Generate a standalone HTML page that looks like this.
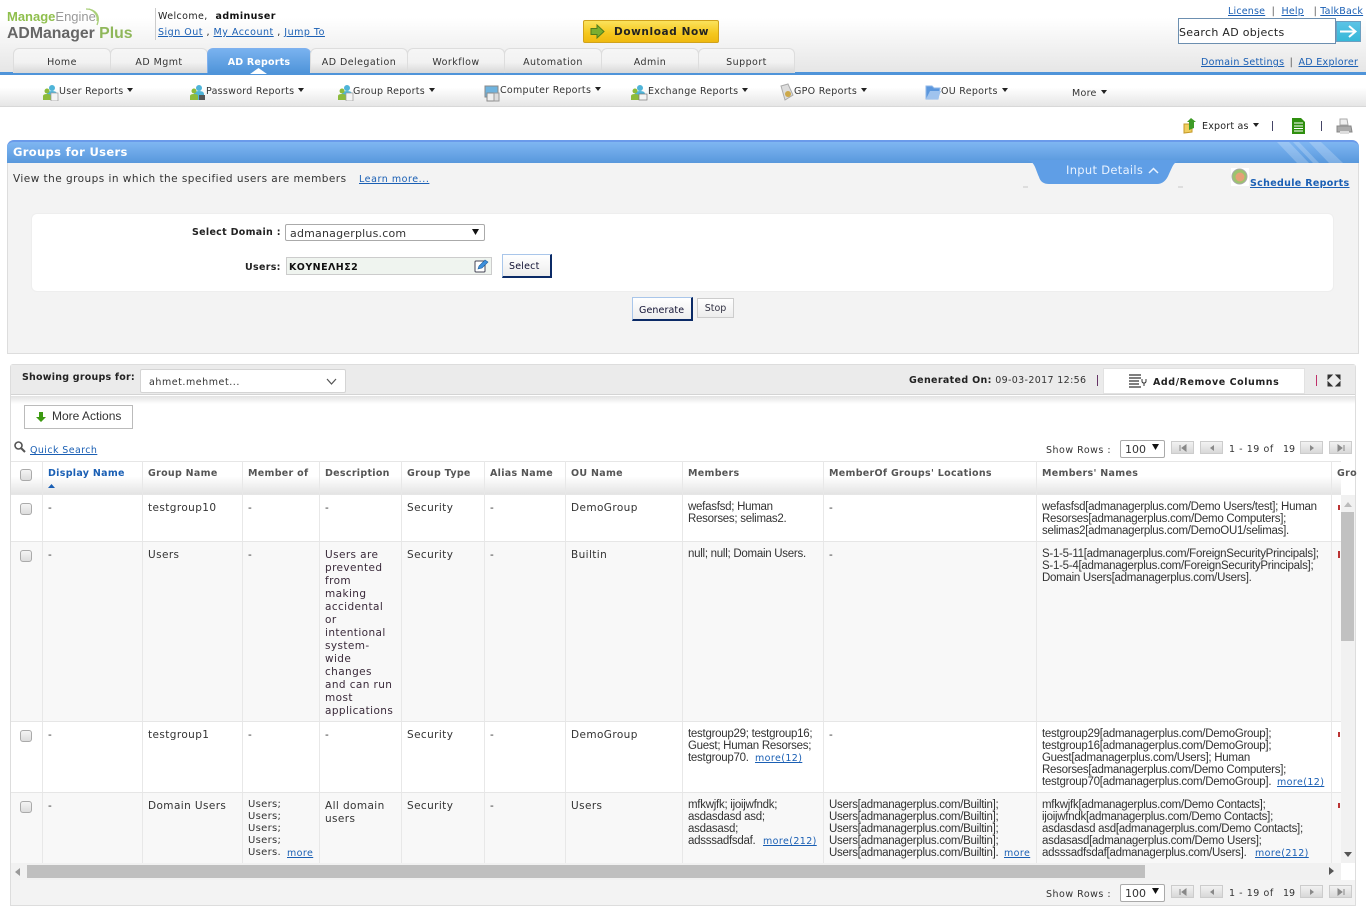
<!DOCTYPE html>
<html><head><meta charset="utf-8"><title>Groups for Users</title>
<style>
html,body{margin:0;padding:0;width:1366px;height:915px;overflow:hidden;background:#fff}
body{position:relative;font-family:"DejaVu Sans",sans-serif;font-size:10px;color:#222}
.a,.v,.r,.b,.l{position:absolute;white-space:nowrap;line-height:14px}
.v{font-size:10.500px;color:#333;letter-spacing:.4px}
.r{font-family:"Liberation Sans",sans-serif;font-size:11.500px;line-height:12px;color:#333;letter-spacing:-.27px}
.b{font-weight:bold;font-size:9.500px;color:#555;letter-spacing:.3px}
.l{color:#1a5fb4;text-decoration:underline;font-size:9.500px;letter-spacing:.4px}
.u{color:#1a5fb4;text-decoration:underline}
.box{position:absolute;box-sizing:border-box}
.tab{position:absolute;top:48px;height:25px;box-sizing:border-box;border:1px solid #ddd;border-bottom:0;border-radius:6px 6px 0 0;background:linear-gradient(#f6f6f6,#f2f2f2 55%,#d8d8d8);text-align:center;line-height:27px;font-size:9.500px;color:#333;letter-spacing:.45px}
.nav{position:absolute;font-size:9.500px;color:#333;line-height:14px;white-space:nowrap;letter-spacing:.28px}
.car{display:inline-block;width:0;height:0;border:3px solid transparent;border-top:4px solid #222;border-bottom:0;margin-left:4px;vertical-align:2px}
.cb{position:absolute;left:20px;width:12px;height:12px;box-sizing:border-box;border:1px solid #aaa;border-radius:3px;background:linear-gradient(#f4f4f4,#dcdcdc)}
.cl{position:absolute;top:461px;height:402px;width:1px;background:#e8e8e8}
.rw{position:absolute;left:11px;width:1330px;height:1px;background:#e6e6e6}
.pg{position:absolute;width:23px;height:13px;box-sizing:border-box;border:1px solid #ccc;background:linear-gradient(#f2f2f2,#d8d8d8)}
.pg svg{position:absolute;left:7px;top:2px}
svg{position:absolute;display:block}
</style></head><body>

<!-- header -->
<div class="box" style="left:0;top:0;width:1366px;height:72px;background:linear-gradient(#fff,#fff 25%,#e6e6e6)"></div>
<div class="box" style="left:0;top:72px;width:1366px;height:3px;background:#4f94d9"></div>
<div class="a" style="left:7px;top:10px;font:bold 13px/14px 'Liberation Sans',sans-serif;color:#8fbf4d">Manage<span style="font-weight:normal;color:#999">Engine</span></div>
<svg style="left:84px;top:8px" width="18" height="20" viewBox="0 0 18 20"><path d="M2 1C11 1 17 7 13 17M5 1C11 3 14 8 13 13" fill="none" stroke="#a9cf79" stroke-width="1.300"/></svg>
<div class="a" style="left:7px;top:26px;font:bold 15.800px/16px 'Liberation Sans',sans-serif;color:#666">ADManager <span style="color:#8fb75a">Plus</span></div>
<div class="box" style="left:155px;top:8px;width:1px;height:32px;background:#ccc"></div>
<div class="a" style="left:158px;top:10px;color:#222;font-size:9.500px;letter-spacing:.4px">Welcome,&nbsp; <b style="color:#111;margin-left:1px">adminuser</b></div>
<div class="a" style="left:158px;top:26px;font-size:9.500px;letter-spacing:.5px"><span class="u">Sign Out</span> , <span class="u">My Account</span> , <span class="u">Jump To</span></div>
<div class="box" style="left:583px;top:20px;width:136px;height:23px;border:1px solid #d0a21c;border-radius:2px;background:linear-gradient(#fbe25c,#f5c71d 60%,#efb90f)"></div>
<svg style="left:590px;top:24px" width="15" height="15" viewBox="0 0 15 15"><path d="M1 4.500H7V1L14 7.500L7 14V10.500H1Z" fill="#7cae2f" stroke="#4f7d1d"/></svg>
<div class="a" style="left:614px;top:25px;font-weight:bold;font-size:10.500px;color:#222;letter-spacing:.6px">Download Now</div>
<div class="a" style="left:1228px;top:5px;font-size:9.500px;color:#555;letter-spacing:.2px"><span class="u">License</span> &nbsp;|&nbsp; <span class="u">Help</span> &nbsp; |&nbsp;<span class="u">TalkBack</span></div>
<div class="box" style="left:1178px;top:18px;width:158px;height:26px;border:1px solid #6c8fb0;background:#fff;font-size:11px;line-height:27px;color:#222;white-space:nowrap;letter-spacing:.3px">Search AD objects</div>
<div class="box" style="left:1336px;top:21px;width:25px;height:21px;border:1px solid #6c9fc0;background:linear-gradient(#5cc3e6,#36b8d8)"></div>
<svg style="left:1339px;top:24px" width="19" height="15" viewBox="0 0 19 15"><path d="M1 7.500H16M10 2L16.500 7.500L10 13" fill="none" stroke="#fff" stroke-width="2"/></svg>
<div class="a" style="left:1201px;top:56px;font-size:9.500px;color:#555;letter-spacing:.3px"><span class="u">Domain Settings</span><span style="margin:0 2px"> | </span><span class="u">AD Explorer</span></div>

<!-- tabs -->
<div class="tab" style="left:13px;width:98px">Home</div>
<div class="tab" style="left:110px;width:98px">AD Mgmt</div>
<div class="tab" style="left:207px;width:104px;background:linear-gradient(#79b2ef,#4f94d9);border:1px solid #7fb0ee;border-bottom:0;color:#fff;font-weight:bold;letter-spacing:.2px">AD Reports</div>
<svg style="left:250px;top:68px" width="17" height="6" viewBox="0 0 17 6"><path d="M0 6L8.500 0L17 6Z" fill="#fff"/></svg>
<div class="tab" style="left:310px;width:98px">AD Delegation</div>
<div class="tab" style="left:407px;width:98px">Workflow</div>
<div class="tab" style="left:504px;width:98px">Automation</div>
<div class="tab" style="left:601px;width:98px">Admin</div>
<div class="tab" style="left:698px;width:97px">Support</div>

<!-- sub nav -->
<div class="box" style="left:0;top:75px;width:1366px;height:32px;background:linear-gradient(#fff,#fff 40%,#e6e6e6);border-bottom:1px solid #d8d8d8"></div>
<svg style="left:43px;top:84px" width="16" height="17" viewBox="0 0 16 17"><circle cx="9" cy="4" r="3" fill="#4fb4d8"/><path d="M4 16V10Q4 7 9 7Q14 7 14 10V16Z" fill="#4fb4d8"/><circle cx="4" cy="7" r="2.500" fill="#8dbb3c"/><path d="M0 16V12Q0 10 4 10Q8 10 8 12V16Z" fill="#8dbb3c"/><rect x="8" y="9" width="7" height="8" fill="#f4f4f4" stroke="#999" stroke-width=".7"/></svg>
<div class="nav" style="left:59px;top:85px">User Reports<i class="car"></i></div>
<svg style="left:190px;top:84px" width="16" height="17" viewBox="0 0 16 17"><circle cx="9" cy="4" r="3" fill="#4fb4d8"/><path d="M4 16V10Q4 7 9 7Q14 7 14 10V16Z" fill="#4fb4d8"/><circle cx="4" cy="7" r="2.500" fill="#8dbb3c"/><path d="M0 16V12Q0 10 4 10Q8 10 8 12V16Z" fill="#8dbb3c"/><rect x="9" y="11" width="6" height="5" fill="#555"/></svg>
<div class="nav" style="left:206px;top:85px">Password Reports<i class="car"></i></div>
<svg style="left:338px;top:84px" width="16" height="17" viewBox="0 0 16 17"><circle cx="9" cy="4" r="3" fill="#4fb4d8"/><path d="M4 16V10Q4 7 9 7Q14 7 14 10V16Z" fill="#4fb4d8"/><circle cx="4" cy="7" r="2.500" fill="#8dbb3c"/><path d="M0 16V12Q0 10 4 10Q8 10 8 12V16Z" fill="#8dbb3c"/><rect x="8" y="9" width="7" height="8" fill="#f4f4f4" stroke="#999" stroke-width=".7"/></svg>
<div class="nav" style="left:353px;top:85px">Group Reports<i class="car"></i></div>
<svg style="left:484px;top:85px" width="17" height="17" viewBox="0 0 17 17"><rect x="1" y="1" width="13" height="11" fill="#6fb3de" stroke="#888"/><rect x="3" y="8" width="7" height="8" fill="#eee" stroke="#888"/><rect x="10" y="8" width="5" height="8" fill="#ddd" stroke="#999"/></svg>
<div class="nav" style="left:500px;top:84px">Computer Reports<i class="car"></i></div>
<svg style="left:631px;top:84px" width="17" height="17" viewBox="0 0 17 17"><circle cx="9" cy="4" r="3" fill="#4fb4d8"/><path d="M4 16V10Q4 7 9 7Q14 7 14 10V16Z" fill="#4fb4d8"/><circle cx="4" cy="7" r="2.500" fill="#8dbb3c"/><path d="M0 16V12Q0 10 4 10Q8 10 8 12V16Z" fill="#8dbb3c"/><rect x="8" y="10" width="8" height="6" fill="#f4f4f4" stroke="#777" stroke-width=".7"/></svg>
<div class="nav" style="left:648px;top:85px">Exchange Reports<i class="car"></i></div>
<svg style="left:778px;top:83px" width="17" height="18" viewBox="0 0 17 18"><path d="M3 3L10 1L15 12L7 17Z" fill="#ddd" stroke="#aaa"/><circle cx="10" cy="11" r="3" fill="#cda94a"/></svg>
<div class="nav" style="left:794px;top:85px">GPO Reports<i class="car"></i></div>
<svg style="left:925px;top:83px" width="17" height="18" viewBox="0 0 17 18"><path d="M1 3H7L9 5H15L13 16H1Z" fill="#5b97dd" stroke="#8fb7e8"/><path d="M1 16L5 8H16L13 16Z" fill="#9fc3ee"/></svg>
<div class="nav" style="left:941px;top:85px">OU Reports<i class="car"></i></div>
<div class="nav" style="left:1072px;top:87px">More<i class="car"></i></div>

<!-- export row -->
<svg style="left:1183px;top:117px" width="15" height="17" viewBox="0 0 15 17"><path d="M1 7H9V15L1 16Z" fill="#f0ce5e" stroke="#c49a2b"/><path d="M8 1L13 5H11V11L6 13V5H4Z" fill="#3e9b26"/></svg>
<div class="a" style="left:1202px;top:120px;font-size:9.500px;color:#222;letter-spacing:.2px">Export as<i class="car"></i></div>
<div class="box" style="left:1272px;top:121px;width:1px;height:10px;background:#446"></div>
<svg style="left:1292px;top:118px" width="13" height="16" viewBox="0 0 13 16"><path d="M0 0H9L13 4V16H0Z" fill="#2f8f0f"/><path d="M2 5H11M2 8H11M2 10.500H11M2 13H11" stroke="#fff"/></svg>
<div class="box" style="left:1321px;top:121px;width:1px;height:10px;background:#446"></div>
<svg style="left:1336px;top:118px" width="17" height="17" viewBox="0 0 17 17"><path d="M4 1H11L12 7H4Z" fill="#eee" stroke="#aaa"/><path d="M1 8H15L16 14H1Z" fill="#aaa" stroke="#888"/><rect x="4" y="13" width="9" height="3" fill="#ddd"/></svg>

<!-- panel -->
<div class="box" style="left:7px;top:140px;width:1352px;height:214px;background:#f3f3f3;border:1px solid #ddd;border-top:0;border-radius:7px 7px 0 0"></div>
<div class="box" style="left:7px;top:140px;width:1352px;height:23px;border-radius:7px 7px 0 0;background:linear-gradient(#7fb6f2,#5898dc);border-top:2px solid #6a9aea;overflow:hidden">
<svg style="left:1270px;top:0" width="70" height="21" viewBox="0 0 70 21"><path d="M0 0H12L32 21H20ZM16 0H22L42 21H36ZM32 0H44L66 21H52Z" fill="#fff" opacity=".22"/></svg></div>
<div class="a" style="left:13px;top:145px;font-weight:bold;font-size:11.500px;color:#fff;letter-spacing:.33px">Groups for Users</div>
<svg style="left:1027px;top:160px" width="154" height="25" viewBox="0 0 154 25"><path d="M0 0C8 2 8 8 12 17Q14 24 22 24H130Q138 24 142 14C146 6 146 2 154 0Z" fill="#5f9ee6"/></svg>
<div class="box" style="left:1023px;top:186px;width:5px;height:2px;background:#ddd"></div>
<div class="box" style="left:1178px;top:186px;width:5px;height:2px;background:#ddd"></div>
<div class="a" style="left:1066px;top:163px;font-size:11.500px;color:#e8f2ff;letter-spacing:.3px">Input Details</div>
<svg style="left:1148px;top:167px" width="11" height="7" viewBox="0 0 11 7"><path d="M1 6L5.500 1.500L10 6" fill="none" stroke="#e8f2ff" stroke-width="1.500"/></svg>
<div class="box" style="left:1231px;top:168px;width:18px;height:18px;background:#fff"></div>
<svg style="left:1231px;top:168px" width="17" height="17" viewBox="0 0 17 17"><circle cx="8.500" cy="8.500" r="7.500" fill="#9cc36e" stroke="#aaa"/><circle cx="9" cy="9" r="4.500" fill="#e6a077"/></svg>
<div class="a" style="left:1250px;top:177px;font-weight:bold;font-size:9.500px;color:#1a5fb4;text-decoration:underline;letter-spacing:.33px">Schedule Reports</div>
<div class="a" style="left:13px;top:172px;font-size:10.500px;color:#333;letter-spacing:.46px">View the groups in which the specified users are members</div>
<div class="l" style="left:359px;top:173px;letter-spacing:.55px">Learn more...</div>

<div class="box" style="left:31px;top:213px;width:1303px;height:79px;background:#fff;border:1px solid #eee;border-radius:6px"></div>
<div class="a" style="left:192px;top:226px;font-weight:bold;font-size:9.500px;color:#222;letter-spacing:.3px">Select Domain :</div>
<div class="box" style="left:285px;top:224px;width:200px;height:17px;border:1px solid #aaa;border-radius:2px;background:#fff;font-size:11px;line-height:17px;padding-left:4px;color:#333;letter-spacing:.2px">admanagerplus.com</div>
<svg style="left:472px;top:229px" width="7" height="6" viewBox="0 0 7 6"><path d="M0 0H7L3.500 6Z" fill="#111"/></svg>
<div class="a" style="left:245px;top:261px;font-weight:bold;font-size:9.500px;color:#222;letter-spacing:.3px">Users:</div>
<div class="box" style="left:286px;top:257px;width:206px;height:18px;border:1px solid #ccc;background:#eff4ef;font-weight:bold;font-size:9.500px;line-height:19px;padding-left:2px;color:#111;letter-spacing:.45px">ΚΟΥΝΕΛΗΣ2</div>
<svg style="left:474px;top:259px" width="15" height="14" viewBox="0 0 15 14"><rect x="1" y="2" width="10" height="11" rx="1" fill="#fff" stroke="#445"/><path d="M4 10L5 7L11 1L14 3L8 9Z" fill="#3b8fdc" stroke="#1f5f9c" stroke-width=".6"/></svg>
<div class="box" style="left:502px;top:254px;width:50px;height:24px;border:1px solid #a9c6ea;border-right:2px solid #0b2a66;border-bottom:2px solid #0b2a66;background:linear-gradient(#fff,#ededed);padding-left:6px;font-size:9.500px;line-height:24px;color:#113;letter-spacing:.2px">Select</div>
<div class="box" style="left:632px;top:297px;width:61px;height:24px;border:1px solid #a9c6ea;border-right:2px solid #0b2a66;border-bottom:2px solid #0b2a66;background:linear-gradient(#fff,#ededed);padding-left:6px;font-size:9.500px;line-height:25px;color:#113;letter-spacing:.1px">Generate</div>
<div class="box" style="left:697px;top:298px;width:37px;height:20px;border:1px solid #ccc;background:linear-gradient(#fff,#ededed);text-align:center;font-size:9.500px;line-height:20px;color:#334">Stop</div>

<!-- report box -->
<div class="box" style="left:10px;top:364px;width:1346px;height:542px;border:1px solid #ddd;border-radius:3px 3px 0 0;background:#fff"></div>
<div class="box" style="left:11px;top:365px;width:1344px;height:30px;background:#ebebeb;border-bottom:1px solid #d4d4d4"></div>
<div class="box" style="left:11px;top:396px;width:1344px;height:8px;background:linear-gradient(#e2e2e2,#fff)"></div>
<div class="a" style="left:22px;top:371px;font-weight:bold;font-size:9.500px;color:#222;letter-spacing:.22px">Showing groups for:</div>
<div class="box" style="left:140px;top:369px;width:206px;height:24px;border:1px solid #d4d4d4;border-radius:2px;background:#fff;font-size:9.500px;line-height:25px;padding-left:8px;color:#333;letter-spacing:.55px">ahmet.mehmet...</div>
<svg style="left:326px;top:378px" width="11" height="7" viewBox="0 0 11 7"><path d="M1 1L5.500 6L10 1" fill="none" stroke="#555" stroke-width="1.200"/></svg>
<div class="a" style="left:909px;top:374px;font-size:9.500px;color:#333;letter-spacing:.35px"><b style="color:#222">Generated On:</b> 09-03-2017 12:56</div>
<div class="box" style="left:1097px;top:375px;width:1px;height:11px;background:#636"></div>
<div class="box" style="left:1103px;top:368px;width:202px;height:26px;background:#fff;border:1px solid #e2e2e2"></div>
<svg style="left:1129px;top:374px" width="18" height="14" viewBox="0 0 18 14"><path d="M0 1H12M0 4H12M0 7H10M0 10H10M0 13H12" stroke="#333" stroke-width="1.300"/><path d="M13 5V7Q13 9 15 9Q17 9 17 7V5M15 9V12" fill="none" stroke="#333"/></svg>
<div class="a" style="left:1153px;top:376px;font-weight:bold;font-size:9.500px;color:#222;letter-spacing:.55px">Add/Remove Columns</div>
<div class="box" style="left:1316px;top:375px;width:1px;height:11px;background:#c0306a"></div>
<svg style="left:1327px;top:374px" width="14" height="13" viewBox="0 0 14 13"><path d="M1 1H5L1 5ZM13 1H9L13 5ZM1 12H5L1 8ZM13 12H9L13 8Z" fill="#333" stroke="#333"/></svg>
<div class="box" style="left:24px;top:405px;width:109px;height:24px;border:1px solid #bbb;background:#fff"></div>
<svg style="left:36px;top:412px" width="10" height="10" viewBox="0 0 10 10"><path d="M3 0H7V5H10L5 10L0 5H3Z" fill="#3d9a12"/></svg>
<div class="a" style="left:52px;top:409px;font:12px/14px 'Liberation Sans',sans-serif;color:#333">More Actions</div>
<svg style="left:14px;top:441px" width="12" height="12" viewBox="0 0 12 12"><circle cx="4.500" cy="4.500" r="3.500" fill="none" stroke="#555" stroke-width="1.600"/><path d="M7 7L11 11" stroke="#555" stroke-width="2"/></svg>
<div class="l" style="left:30px;top:444px">Quick Search</div>

<!-- pagers -->
<div class="a" style="left:1046px;top:444px;font-size:9.500px;color:#333;letter-spacing:.5px">Show Rows :</div>
<div class="box" style="left:1120px;top:440px;width:45px;height:18px;border:1px solid #aaa;border-radius:2px;background:#fff;font-size:11px;line-height:17px;padding-left:4px;color:#333">100</div>
<svg style="left:1152px;top:444px" width="7" height="6" viewBox="0 0 7 6"><path d="M0 0H7L3.500 6Z" fill="#111"/></svg>
<div class="pg" style="left:1171px;top:441px"><svg width="8" height="8" viewBox="0 0 8 8"><path d="M1 1V7M7 1V7L3 4Z" stroke="#888" fill="#888"/></svg></div>
<div class="pg" style="left:1200px;top:441px"><svg width="8" height="8" viewBox="0 0 8 8"><path d="M6 1V7L2 4Z" fill="#888"/></svg></div>
<div class="a" style="left:1229px;top:443px;font-size:9.500px;color:#333;letter-spacing:.55px">1 - 19 of</div>
<div class="a" style="left:1283px;top:443px;font-size:9.500px;color:#333">19</div>
<div class="pg" style="left:1300px;top:441px"><svg width="8" height="8" viewBox="0 0 8 8"><path d="M2 1V7L6 4Z" fill="#888"/></svg></div>
<div class="pg" style="left:1329px;top:441px"><svg width="8" height="8" viewBox="0 0 8 8"><path d="M7 1V7M1 1V7L5 4Z" stroke="#888" fill="#888"/></svg></div>

<!-- table -->
<div class="box" style="left:11px;top:461px;width:1330px;height:33px;background:linear-gradient(#fff,#fff 45%,#e4e4e4);border-top:1px solid #e6e6e6"></div>
<div class="box" style="left:11px;top:542px;width:1330px;height:179px;background:#f8f8f8"></div>
<div class="box" style="left:11px;top:793px;width:1330px;height:70px;background:#f8f8f8"></div>
<div class="cl" style="left:42px"></div><div class="cl" style="left:142px"></div><div class="cl" style="left:242px"></div><div class="cl" style="left:319px"></div><div class="cl" style="left:401px"></div><div class="cl" style="left:484px"></div><div class="cl" style="left:565px"></div><div class="cl" style="left:682px"></div><div class="cl" style="left:823px"></div><div class="cl" style="left:1036px"></div><div class="cl" style="left:1331px"></div>
<div class="rw" style="top:494px"></div><div class="rw" style="top:541px"></div><div class="rw" style="top:721px"></div><div class="rw" style="top:792px"></div>

<div class="cb" style="top:469px"></div><div class="cb" style="top:503px"></div><div class="cb" style="top:550px"></div><div class="cb" style="top:730px"></div><div class="cb" style="top:801px"></div>
<div class="b" style="left:48px;top:467px;color:#1a5fb4">Display Name</div>
<svg style="left:48px;top:484px" width="7" height="4" viewBox="0 0 7 4"><path d="M0 4L3.500 0L7 4Z" fill="#1a5fb4"/></svg>
<div class="b" style="left:148px;top:467px">Group Name</div>
<div class="b" style="left:248px;top:467px">Member of</div>
<div class="b" style="left:325px;top:467px">Description</div>
<div class="b" style="left:407px;top:467px">Group Type</div>
<div class="b" style="left:490px;top:467px">Alias Name</div>
<div class="b" style="left:571px;top:467px">OU Name</div>
<div class="b" style="left:688px;top:467px">Members</div>
<div class="b" style="left:829px;top:467px">MemberOf Groups' Locations</div>
<div class="b" style="left:1042px;top:467px">Members' Names</div>
<div class="b" style="left:1337px;top:467px">Gro</div>

<!-- row1 -->
<div class="v" style="left:48px;top:501px">-</div><div class="v" style="left:148px;top:501px">testgroup10</div><div class="v" style="left:248px;top:501px">-</div><div class="v" style="left:325px;top:501px">-</div><div class="v" style="left:407px;top:501px">Security</div><div class="v" style="left:490px;top:501px">-</div><div class="v" style="left:571px;top:501px">DemoGroup</div>
<div class="r" style="left:688px;top:501px">wefasfsd; Human<br>Resorses; selimas2.</div>
<div class="v" style="left:829px;top:501px">-</div>
<div class="r" style="left:1042px;top:501px">wefasfsd[admanagerplus.com/Demo Users/test]; Human<br>Resorses[admanagerplus.com/Demo Computers];<br>selimas2[admanagerplus.com/DemoOU1/selimas].</div>
<!-- row2 -->
<div class="v" style="left:48px;top:548px">-</div><div class="v" style="left:148px;top:548px">Users</div><div class="v" style="left:248px;top:548px">-</div>
<div class="v" style="left:325px;top:549px;line-height:13px;color:#3a2a3a">Users are<br>prevented<br>from<br>making<br>accidental<br>or<br>intentional<br>system-<br>wide<br>changes<br>and can run<br>most<br>applications</div>
<div class="v" style="left:407px;top:548px">Security</div><div class="v" style="left:490px;top:548px">-</div><div class="v" style="left:571px;top:548px">Builtin</div>
<div class="r" style="left:688px;top:548px">null; null; Domain Users.</div>
<div class="v" style="left:829px;top:548px">-</div>
<div class="r" style="left:1042px;top:548px">S-1-5-11[admanagerplus.com/ForeignSecurityPrincipals];<br>S-1-5-4[admanagerplus.com/ForeignSecurityPrincipals];<br>Domain Users[admanagerplus.com/Users].</div>
<!-- row3 -->
<div class="v" style="left:48px;top:728px">-</div><div class="v" style="left:148px;top:728px">testgroup1</div><div class="v" style="left:248px;top:728px">-</div><div class="v" style="left:325px;top:728px">-</div><div class="v" style="left:407px;top:728px">Security</div><div class="v" style="left:490px;top:728px">-</div><div class="v" style="left:571px;top:728px">DemoGroup</div>
<div class="r" style="left:688px;top:728px">testgroup29; testgroup16;<br>Guest; Human Resorses;<br>testgroup70.</div><div class="l" style="left:755px;top:752px">more(12)</div>
<div class="v" style="left:829px;top:728px">-</div>
<div class="r" style="left:1042px;top:728px">testgroup29[admanagerplus.com/DemoGroup];<br>testgroup16[admanagerplus.com/DemoGroup];<br>Guest[admanagerplus.com/Users]; Human<br>Resorses[admanagerplus.com/Demo Computers];<br>testgroup70[admanagerplus.com/DemoGroup].</div><div class="l" style="left:1277px;top:776px">more(12)</div>
<!-- row4 -->
<div class="v" style="left:48px;top:799px">-</div><div class="v" style="left:148px;top:799px">Domain Users</div>
<div class="v" style="left:248px;top:799px;line-height:12px;font-size:10px;letter-spacing:.3px">Users;<br>Users;<br>Users;<br>Users;<br>Users.</div><div class="l" style="left:287px;top:847px">more</div>
<div class="v" style="left:325px;top:800px;line-height:13px">All domain<br>users</div>
<div class="v" style="left:407px;top:799px">Security</div><div class="v" style="left:490px;top:799px">-</div><div class="v" style="left:571px;top:799px">Users</div>
<div class="r" style="left:688px;top:799px">mfkwjfk; ijoijwfndk;<br>asdasdasd asd;<br>asdasasd;<br>adsssadfsdaf.</div><div class="l" style="left:763px;top:835px">more(212)</div>
<div class="r" style="left:829px;top:799px">Users[admanagerplus.com/Builtin];<br>Users[admanagerplus.com/Builtin];<br>Users[admanagerplus.com/Builtin];<br>Users[admanagerplus.com/Builtin];<br>Users[admanagerplus.com/Builtin].</div><div class="l" style="left:1004px;top:847px">more</div>
<div class="r" style="left:1042px;top:799px">mfkwjfk[admanagerplus.com/Demo Contacts];<br>ijoijwfndk[admanagerplus.com/Demo Contacts];<br>asdasdasd asd[admanagerplus.com/Demo Contacts];<br>asdasasd[admanagerplus.com/Demo Users];<br>adsssadfsdaf[admanagerplus.com/Users].</div><div class="l" style="left:1255px;top:847px">more(212)</div>
<!-- clipped col markers -->
<div class="box" style="left:1338px;top:505px;width:2px;height:5px;background:#b33"></div>
<div class="box" style="left:1338px;top:551px;width:2px;height:7px;background:#b33"></div>
<div class="box" style="left:1338px;top:732px;width:2px;height:5px;background:#b33"></div>
<div class="box" style="left:1338px;top:803px;width:2px;height:5px;background:#b33"></div>

<!-- scrollbars -->
<div class="box" style="left:1341px;top:495px;width:14px;height:368px;background:#f1f1f1"></div>
<svg style="left:1344px;top:502px" width="8" height="5" viewBox="0 0 8 5"><path d="M0 5L4 0L8 5Z" fill="#bbb"/></svg>
<div class="box" style="left:1341px;top:512px;width:13px;height:129px;background:#c1c1c1"></div>
<svg style="left:1344px;top:852px" width="8" height="5" viewBox="0 0 8 5"><path d="M0 0L4 5L8 0Z" fill="#555"/></svg>
<div class="box" style="left:11px;top:863px;width:1330px;height:17px;background:#f1f1f1"></div>
<div class="box" style="left:27px;top:865px;width:1118px;height:13px;background:#bfbfbf"></div>
<svg style="left:15px;top:868px" width="5" height="8" viewBox="0 0 5 8"><path d="M5 0L0 4L5 8Z" fill="#999"/></svg>
<svg style="left:1329px;top:867px" width="5" height="8" viewBox="0 0 5 8"><path d="M0 0L5 4L0 8Z" fill="#555"/></svg>
<div class="box" style="left:11px;top:880px;width:1344px;height:25px;background:#f3f3f3"></div>
<div class="a" style="left:1046px;top:888px;font-size:9.500px;color:#333;letter-spacing:.5px">Show Rows :</div>
<div class="box" style="left:1120px;top:884px;width:45px;height:18px;border:1px solid #aaa;border-radius:2px;background:#fff;font-size:11px;line-height:17px;padding-left:4px;color:#333">100</div>
<svg style="left:1152px;top:888px" width="7" height="6" viewBox="0 0 7 6"><path d="M0 0H7L3.500 6Z" fill="#111"/></svg>
<div class="pg" style="left:1171px;top:885px"><svg width="8" height="8" viewBox="0 0 8 8"><path d="M1 1V7M7 1V7L3 4Z" stroke="#888" fill="#888"/></svg></div>
<div class="pg" style="left:1200px;top:885px"><svg width="8" height="8" viewBox="0 0 8 8"><path d="M6 1V7L2 4Z" fill="#888"/></svg></div>
<div class="a" style="left:1229px;top:887px;font-size:9.500px;color:#333;letter-spacing:.55px">1 - 19 of</div>
<div class="a" style="left:1283px;top:887px;font-size:9.500px;color:#333">19</div>
<div class="pg" style="left:1300px;top:885px"><svg width="8" height="8" viewBox="0 0 8 8"><path d="M2 1V7L6 4Z" fill="#888"/></svg></div>
<div class="pg" style="left:1329px;top:885px"><svg width="8" height="8" viewBox="0 0 8 8"><path d="M7 1V7M1 1V7L5 4Z" stroke="#888" fill="#888"/></svg></div>
</body></html>
